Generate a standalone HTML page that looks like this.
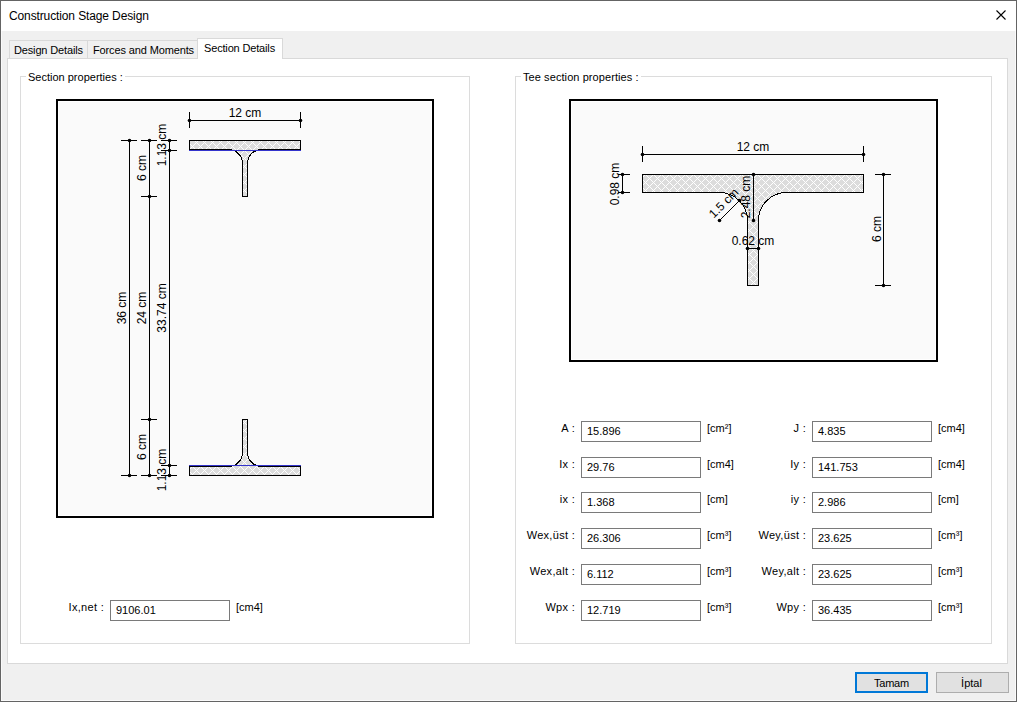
<!DOCTYPE html>
<html><head><meta charset="utf-8">
<style>
*{margin:0;padding:0;box-sizing:border-box}
html,body{width:1017px;height:702px;overflow:hidden;background:#f0f0f0}
body{position:relative;font-family:"Liberation Sans",sans-serif;font-size:11px;color:#000}
.a{position:absolute;white-space:nowrap}
#win{position:absolute;left:0;top:0;width:1017px;height:702px;border:1px solid #646464;background:#f0f0f0}
#inner{position:absolute;left:1px;top:1px;width:1015px;height:700px;border:1px solid #fafafa;border-top:none}
#title{position:absolute;left:1px;top:1px;width:1015px;height:30px;background:#fff}
.tab{position:absolute;top:40px;height:19px;border:1px solid #d9d9d9;border-bottom:none;background:#f0f0f0}
#page{position:absolute;left:7px;top:58px;width:1001px;height:606px;border:1px solid #d9d9d9;background:#fff}
.grp{position:absolute;border:1px solid #dcdcdc}
.glab{position:absolute;background:#fff;padding:0 2px;white-space:nowrap}
.tb{position:absolute;width:120px;height:21px;border:1px solid #7a7a7a;background:#fff;padding-left:5px;line-height:19px;white-space:nowrap}
.lab{position:absolute;text-align:right;white-space:nowrap;line-height:13px;font-size:11px;letter-spacing:0.3px}
.un{position:absolute;white-space:nowrap;line-height:13px}
.btn{position:absolute;top:672px;height:21px;background:#e1e1e1;border:1px solid #adadad;text-align:center;line-height:20px}
</style></head><body>
<div id="win"></div><div id="inner"></div>
<div id="title"></div>
<div class="a" style="left:9px;top:9px;font-size:12px;letter-spacing:-0.12px">Construction Stage Design</div>
<svg style="position:absolute;left:996px;top:10px" width="10" height="10"><path d="M0.5 0.5L9.5 9.5M9.5 0.5L0.5 9.5" stroke="#000" stroke-width="1.1" fill="none"/></svg>

<div class="tab" style="left:9px;width:79px"></div>
<div class="tab" style="left:87px;width:111px"></div>
<div id="page"></div>
<div class="tab" style="left:197px;top:38px;width:86px;height:21px;background:#fff;border-color:#d9d9d9"></div>
<div class="a" style="left:14px;top:44px;letter-spacing:-0.15px">Design Details</div>
<div class="a" style="left:93px;top:44px;letter-spacing:-0.13px">Forces and Moments</div>
<div class="a" style="left:204px;top:42px;letter-spacing:-0.16px">Section Details</div>

<div class="grp" style="left:20px;top:76px;width:450px;height:568px"></div>
<div class="glab" style="left:26px;top:71px">Section properties :</div>
<div class="grp" style="left:515px;top:76px;width:477px;height:568px"></div>
<div class="glab" style="left:521px;top:71px;letter-spacing:0.08px">Tee section properties :</div>
<svg width="1017" height="702" style="position:absolute;left:0;top:0">
<defs><pattern id="hx" x="4" y="6" width="8" height="8" patternUnits="userSpaceOnUse"><rect width="8" height="8" fill="#dcdcdc"/><path d="M0 0h1v1h-1zM1 1h1v1h-1zM1 7h1v1h-1zM2 2h1v1h-1zM2 6h1v1h-1zM3 3h1v1h-1zM3 5h1v1h-1zM4 4h1v1h-1zM5 5h1v1h-1zM5 3h1v1h-1zM6 6h1v1h-1zM6 2h1v1h-1zM7 7h1v1h-1zM7 1h1v1h-1z" fill="#fff"/></pattern><pattern id="hx2" x="1" y="2" width="8" height="8" patternUnits="userSpaceOnUse"><rect width="8" height="8" fill="#dcdcdc"/><path d="M0 0h1v1h-1zM1 1h1v1h-1zM1 7h1v1h-1zM2 2h1v1h-1zM2 6h1v1h-1zM3 3h1v1h-1zM3 5h1v1h-1zM4 4h1v1h-1zM5 5h1v1h-1zM5 3h1v1h-1zM6 6h1v1h-1zM6 2h1v1h-1zM7 7h1v1h-1zM7 1h1v1h-1z" fill="#fff"/></pattern></defs>
<g shape-rendering="crispEdges">
<rect x="56" y="99" width="378" height="419" fill="#000"/>
<rect x="58" y="101" width="374" height="415" fill="#fff"/>
<rect x="59" y="102" width="372" height="413" fill="#fafafa"/>
<rect x="569" y="99" width="369" height="263" fill="#000"/>
<rect x="571" y="101" width="365" height="259" fill="#fff"/>
<rect x="572" y="102" width="363" height="257" fill="#fafafa"/>
</g>
<path d="M189.5,140.5 H300.5 V149.5 H261.5 A14,14 0 0 0 247.5,163.5 V196.5 H242.5 V163.5 A14,14 0 0 0 228.5,149.5 H189.5 Z" fill="url(#hx)" stroke="#000" stroke-width="1" shape-rendering="crispEdges"/>
<g shape-rendering="crispEdges"><rect x="189" y="150" width="112" height="1" fill="#3333cc"/></g>
<path d="M189.5,475.5 H300.5 V466.5 H261.5 A14,14 0 0 1 247.5,452.5 V419.5 H242.5 V452.5 A14,14 0 0 1 228.5,466.5 H189.5 Z" fill="url(#hx)" stroke="#000" stroke-width="1" shape-rendering="crispEdges"/>
<g shape-rendering="crispEdges"><rect x="189" y="465" width="112" height="1" fill="#3333cc"/></g>
<g shape-rendering="crispEdges"><rect x="189" y="120" width="112" height="1" fill="#000"/><rect x="189" y="112" width="1" height="16" fill="#000"/><rect x="300" y="112" width="1" height="16" fill="#000"/><rect x="129" y="140" width="1" height="336" fill="#000"/><rect x="121" y="140" width="16" height="1" fill="#000"/><rect x="121" y="475" width="16" height="1" fill="#000"/><rect x="149" y="140" width="1" height="336" fill="#000"/><rect x="141" y="140" width="16" height="1" fill="#000"/><rect x="141" y="196" width="16" height="1" fill="#000"/><rect x="141" y="419" width="16" height="1" fill="#000"/><rect x="141" y="475" width="16" height="1" fill="#000"/><rect x="169" y="140" width="1" height="336" fill="#000"/><rect x="161" y="140" width="16" height="1" fill="#000"/><rect x="161" y="150" width="16" height="1" fill="#000"/><rect x="161" y="465" width="16" height="1" fill="#000"/><rect x="161" y="475" width="16" height="1" fill="#000"/></g>
<circle cx="189.5" cy="120.5" r="1.8" fill="#000"/><circle cx="300.5" cy="120.5" r="1.8" fill="#000"/><circle cx="129.5" cy="140.5" r="1.8" fill="#000"/><circle cx="129.5" cy="475.5" r="1.8" fill="#000"/><circle cx="149.5" cy="140.5" r="1.8" fill="#000"/><circle cx="149.5" cy="196.5" r="1.8" fill="#000"/><circle cx="149.5" cy="419.5" r="1.8" fill="#000"/><circle cx="149.5" cy="475.5" r="1.8" fill="#000"/><circle cx="169.5" cy="140.5" r="1.8" fill="#000"/><circle cx="169.5" cy="150.5" r="1.8" fill="#000"/><circle cx="169.5" cy="465.5" r="1.8" fill="#000"/><circle cx="169.5" cy="475.5" r="1.8" fill="#000"/>
<path d="M642.5,174.5 H863.5 V192.5 H786.5 A28,28 0 0 0 758.5,220.5 V285.5 H747.5 V220.5 A28,28 0 0 0 719.5,192.5 H642.5 Z" fill="url(#hx2)" stroke="#000" stroke-width="1" shape-rendering="crispEdges"/>
<g shape-rendering="crispEdges"><rect x="642" y="154" width="222" height="1" fill="#000"/><rect x="642" y="146" width="1" height="16" fill="#000"/><rect x="863" y="146" width="1" height="16" fill="#000"/><rect x="622" y="174" width="1" height="19" fill="#000"/><rect x="618" y="174" width="12" height="1" fill="#000"/><rect x="618" y="192" width="12" height="1" fill="#000"/><rect x="883" y="174" width="1" height="112" fill="#000"/><rect x="875" y="174" width="16" height="1" fill="#000"/><rect x="875" y="285" width="16" height="1" fill="#000"/><rect x="753" y="174" width="1" height="47" fill="#000"/><rect x="747" y="248" width="12" height="1" fill="#000"/></g>
<line x1="719.5" y1="220.5" x2="739.5" y2="200.5" stroke="#000" stroke-width="1"/>
<circle cx="642.5" cy="154.5" r="1.8" fill="#000"/><circle cx="863.5" cy="154.5" r="1.8" fill="#000"/><circle cx="622.5" cy="174.5" r="1.8" fill="#000"/><circle cx="622.5" cy="192.5" r="1.8" fill="#000"/><circle cx="883.5" cy="174.5" r="1.8" fill="#000"/><circle cx="883.5" cy="285.5" r="1.8" fill="#000"/><circle cx="753.5" cy="174.5" r="1.8" fill="#000"/><circle cx="753.5" cy="220.5" r="1.8" fill="#000"/><circle cx="719.5" cy="220.5" r="1.8" fill="#000"/><circle cx="739.5" cy="200.5" r="1.8" fill="#000"/><circle cx="747.5" cy="248.5" r="1.8" fill="#000"/><circle cx="758.5" cy="248.5" r="1.8" fill="#000"/>
<g font-family="Liberation Sans" font-size="12px" fill="#000"><text x="245" y="117" text-anchor="middle">12 cm</text><text transform="translate(126,308) rotate(-90)" text-anchor="middle">36 cm</text><text transform="translate(146,168) rotate(-90)" text-anchor="middle">6 cm</text><text transform="translate(146,308) rotate(-90)" text-anchor="middle">24 cm</text><text transform="translate(146,447) rotate(-90)" text-anchor="middle">6 cm</text><text transform="translate(166,145) rotate(-90)" text-anchor="middle">1.13 cm</text><text transform="translate(166,308) rotate(-90)" text-anchor="middle">33.74 cm</text><text transform="translate(166,470) rotate(-90)" text-anchor="middle">1.13 cm</text><text x="753" y="151" text-anchor="middle">12 cm</text><text transform="translate(619,184) rotate(-90)" text-anchor="middle">0.98 cm</text><text transform="translate(881,229) rotate(-90)" text-anchor="middle">6 cm</text><text transform="translate(750,197) rotate(-90)" text-anchor="middle">2.48 cm</text><text x="753" y="245" text-anchor="middle">0.62 cm</text><text transform="translate(726.5,206) rotate(-45)" text-anchor="middle">1.5 cm</text></g>
</svg>
<div class="lab" style="right:442px;top:422px">A :</div><div class="tb" style="left:581px;top:421px">15.896</div><div class="un" style="left:707px;top:422px">[cm²]</div>
<div class="lab" style="right:211px;top:422px">J :</div><div class="tb" style="left:812px;top:421px">4.835</div><div class="un" style="left:938px;top:422px">[cm4]</div>
<div class="lab" style="right:442px;top:458px">Ix :</div><div class="tb" style="left:581px;top:457px">29.76</div><div class="un" style="left:707px;top:458px">[cm4]</div>
<div class="lab" style="right:211px;top:458px">Iy :</div><div class="tb" style="left:812px;top:457px">141.753</div><div class="un" style="left:938px;top:458px">[cm4]</div>
<div class="lab" style="right:442px;top:493px">ix :</div><div class="tb" style="left:581px;top:492px">1.368</div><div class="un" style="left:707px;top:493px">[cm]</div>
<div class="lab" style="right:211px;top:493px">iy :</div><div class="tb" style="left:812px;top:492px">2.986</div><div class="un" style="left:938px;top:493px">[cm]</div>
<div class="lab" style="right:442px;top:529px">Wex,üst :</div><div class="tb" style="left:581px;top:528px">26.306</div><div class="un" style="left:707px;top:529px">[cm³]</div>
<div class="lab" style="right:211px;top:529px">Wey,üst :</div><div class="tb" style="left:812px;top:528px">23.625</div><div class="un" style="left:938px;top:529px">[cm³]</div>
<div class="lab" style="right:442px;top:565px">Wex,alt :</div><div class="tb" style="left:581px;top:564px">6.112</div><div class="un" style="left:707px;top:565px">[cm³]</div>
<div class="lab" style="right:211px;top:565px">Wey,alt :</div><div class="tb" style="left:812px;top:564px">23.625</div><div class="un" style="left:938px;top:565px">[cm³]</div>
<div class="lab" style="right:442px;top:601px">Wpx :</div><div class="tb" style="left:581px;top:600px">12.719</div><div class="un" style="left:707px;top:601px">[cm³]</div>
<div class="lab" style="right:211px;top:601px">Wpy :</div><div class="tb" style="left:812px;top:600px">36.435</div><div class="un" style="left:938px;top:601px">[cm³]</div>
<div class="lab" style="right:913px;top:601px">Ix,net :</div><div class="tb" style="left:110px;top:600px">9106.01</div><div class="un" style="left:236px;top:601px">[cm4]</div>
<div class="btn" style="left:855px;width:73px;border:2px solid #0078d7;line-height:18px;letter-spacing:-0.25px">Tamam</div>
<div class="btn" style="left:936px;width:73px;padding-right:2px">İptal</div>
</body></html>
